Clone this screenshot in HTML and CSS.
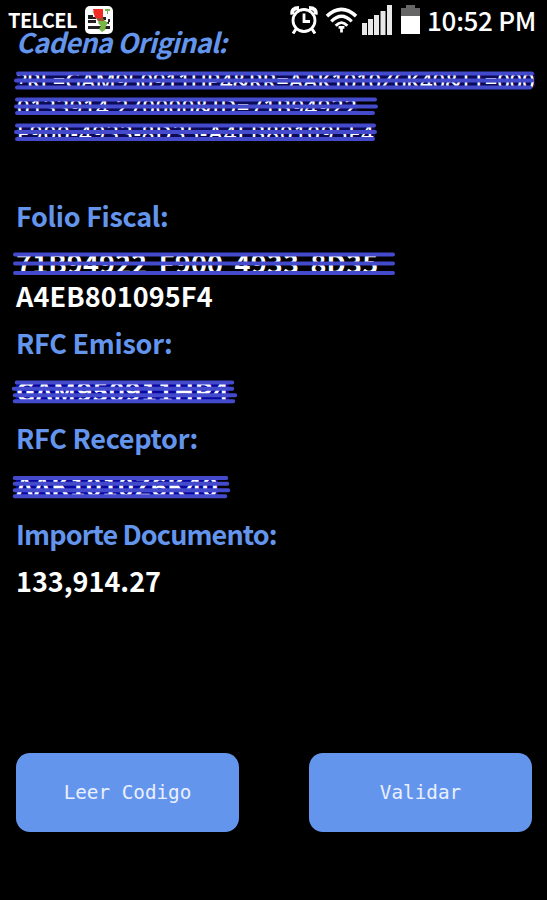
FILE: index.html
```
<!DOCTYPE html>
<html lang="es">
<head>
  <meta charset="UTF-8" />
  <title>Validar CFDI</title>
  <link rel="stylesheet" href="styles.css">
</head>
<body>
  <div class="screen">
    <header class="statusbar">
      <span class="carrier">TELCEL</span>
      <svg class="app-icon" viewBox="0 0 28 28">
        <rect width="28" height="28" rx="5" fill="#fff" />
        <path d="M3 9h5v2h3v2H3zM3 14h8v3H3zM3 20h22v3H3zM18 11h3v3h-3zM23 13h2v3h-2zM18 16h6v2h-6z" fill="#222" />
        <path d="M7 5l4 6 3 3-1 3 3 3-2 3 3 3 3-2 1-4 2-3-5-4zM20 3h5v2h-2v3h-1V5h-2z" fill="#78b648" />
        <path d="M8 3h10v9h-8z" fill="#f02c24" />
        <path d="M11 12h7l1 3h-6z" fill="#a3502e" />
      </svg>
      <div class="status-right">
        <svg class="alarm" viewBox="0 0 28 28" fill="none" stroke="#fff">
          <circle cx="14" cy="14.500" r="11" stroke-width="2.8" />
          <path d="M14 7.500v8h6" stroke-width="2.800" />
          <path d="M2.500 8.500Q1 2 9 2M25.500 8.500Q27 2 19 2" stroke-width="4" />
          <path d="M6 23l-3 4.500M22 23l3 4.500" stroke-width="3" />
        </svg>
        <svg class="wifi" viewBox="0 0 34 28" fill="none" stroke="#fff">
          <path d="M2 10Q17-4 32 10" stroke-width="3.600" />
          <path d="M6.500 15.500Q17 5 27.500 15.500" stroke-width="3.400" />
          <path d="M11 20Q17 13.500 23 20" stroke-width="3" />
          <path d="M14 21.500h6M17 22v5" stroke-width="2.800" />
        </svg>
        <svg class="signal" viewBox="0 0 30 30" fill="#e8e8e8">
          <path d="M0 18h5v12H0zM6 14h5v16H6zM12 10h5v20h-5zM18.500 6h5v24h-5zM25 0h5v30h-5z" />
        </svg>
        <svg class="battery" viewBox="0 0 19 29">
          <path d="M5 0h9v3h5v9H0V3h5z" fill="#666" />
          <path d="M0 11h19v18H0z" fill="#fff" />
        </svg>
        <span class="clock">10:52 PM</span>
      </div>
    </header>

    <main class="content">
      <h2 class="label title"><span>Cadena Original:</span></h2>

      <div class="cadena">
        <p class="row"><span class="r1">?RE=GAM950911HP4&amp;RR=AAK1010Z6K40&amp;TT=000</span>
          <svg class="strike" viewBox="0 0 547 26"><path d="M18 6.500H532M16 13.500H532M17 20.500H530" /></svg>
        </p>
        <p class="row"><span class="r2">0133914.270000&amp;ID=71B94922</span>
          <svg class="strike" viewBox="0 0 547 26"><path d="M17 6.500H375M16 13.500H376M17 20H373" /></svg>
        </p>
        <p class="row"><span class="r3">F900-4933-8D35-A4EB801095F4</span>
          <svg class="strike" viewBox="0 0 547 26"><path d="M17 6.500H374M16 13H375M17 20H373" /></svg>
        </p>
      </div>

      <h2 class="label folio-label"><span>Folio Fiscal:</span></h2>
      <div class="value folio"><span>71B94922 F900 4933 8D35</span>
        <svg class="strike" viewBox="0 0 547 32"><path d="M15 6.500H393M15 15.500H393M15 25H393" /></svg>
      </div>
      <div class="value folio-end"><span>A4EB801095F4</span></div>

      <h2 class="label"><span>RFC Emisor:</span></h2>
      <div class="value rfc"><span class="emisor">GAM950911HP4</span>
        <svg class="strike" viewBox="0 0 547 48"><path d="M15 15.500H232M12 22H232M13 28.500H235M13 34.500H233" /></svg>
      </div>

      <h2 class="label"><span>RFC Receptor:</span></h2>
      <div class="value rfc"><span class="receptor">AAK1010Z6K40</span>
        <svg class="strike" viewBox="0 0 547 48"><path d="M13 16H226M13 22H227M13 28.500H228M13 34.500H225" /></svg>
      </div>

      <h2 class="label importe-label"><span>Importe Documento:</span></h2>
      <div class="value importe"><span>133,914.27</span></div>
    </main>

    <div class="actions">
      <button type="button">Leer Codigo</button>
      <button type="button">Validar</button>
    </div>
  </div>
</body>
</html>
```
FILE: styles.css
```
* {
  box-sizing: border-box;
}

body {
  margin: 0;
  background: #000;
  color: #fff;
  font-family: 'Noto Sans CJK KR', 'Noto Sans', sans-serif;
}

.screen {
  width: 547px;
  height: 900px;
  display: flex;
  flex-direction: column;
  overflow: hidden;
}

.statusbar {
  height: 36px;
  flex: none;
  display: flex;
  align-items: center;
  padding: 3px 11px 0 8px;
}

.carrier {
  font-size: 20px;
  font-weight: 700;
  line-height: 30px;
  letter-spacing: -0.6px;
}

.app-icon {
  width: 28px;
  height: 28px;
  margin-left: 8px;
}

.status-right {
  margin-left: auto;
  display: flex;
  align-items: center;
}

.alarm {
  width: 28px;
  height: 28px;
}

.wifi {
  width: 33px;
  height: 28px;
  margin-left: 7px;
}

.signal {
  width: 30px;
  height: 30px;
  margin-left: 4px;
}

.battery {
  width: 19px;
  height: 29px;
  margin-left: 9px;
}

.clock {
  margin-left: 7px;
  font-size: 26px;
  line-height: 30px;
  font-weight: 500;
  letter-spacing: -0.3px;
}

.content {
  flex: none;
  height: 717px;
}

.label,
.value {
  margin: 0;
  padding-left: 16px;
  height: 47.7px;
  line-height: 47px;
  font-size: 27px;
  font-weight: 700;
  white-space: nowrap;
}

.label {
  color: #6495ed;
  letter-spacing: -0.3px;
}

.title {
  height: 31px;
  line-height: 11px;
  font-style: italic;
  letter-spacing: -0.7px;
}

.importe-label {
  letter-spacing: -0.9px;
}

.cadena {
  height: 125px;
}

.row {
  position: relative;
  margin: 0;
  height: 26px;
  line-height: 26px;
  padding-left: 17px;
  font-family: 'Noto Sans', sans-serif;
  font-size: 22px;
  font-weight: 500;
  white-space: nowrap;
}

.row span {
  background: linear-gradient(#0b0b58, #0b0b58) center / 100% 14px no-repeat;
}

.r1 {
  letter-spacing: -0.1px;
}

.r2 {
  letter-spacing: 0.6px;
}

.r3 {
  letter-spacing: 1.1px;
}

/* pen strokes laid over the hidden values */
.strike {
  position: absolute;
  left: 0;
  top: 0;
  width: 547px;
  height: 100%;
  fill: none;
  stroke: #434acb;
  stroke-width: 4;
  stroke-linecap: round;
}

.folio,
.rfc {
  position: relative;
}

.rfc span {
  background: linear-gradient(#0808a0, #0808a0) center / 100% 19px no-repeat;
}

.emisor {
  letter-spacing: 0.3px;
}

.receptor {
  letter-spacing: 0.2px;
}

.folio {
  height: 32px;
  line-height: 29px;
  letter-spacing: 0.2px;
  word-spacing: 5px;
}

.folio-end {
  height: 39px;
  line-height: 31px;
  letter-spacing: 0.1px;
}

.folio-label {
  height: 56px;
}

.actions {
  display: flex;
  justify-content: space-between;
  padding: 0 15px 0 16px;
}

.actions button {
  width: 223px;
  height: 79px;
  border: none;
  border-radius: 14px;
  background: #6495ed;
  color: #eaf0ff;
  font-family: 'DejaVu Sans Mono', monospace;
  font-size: 19.3px;
}
```
